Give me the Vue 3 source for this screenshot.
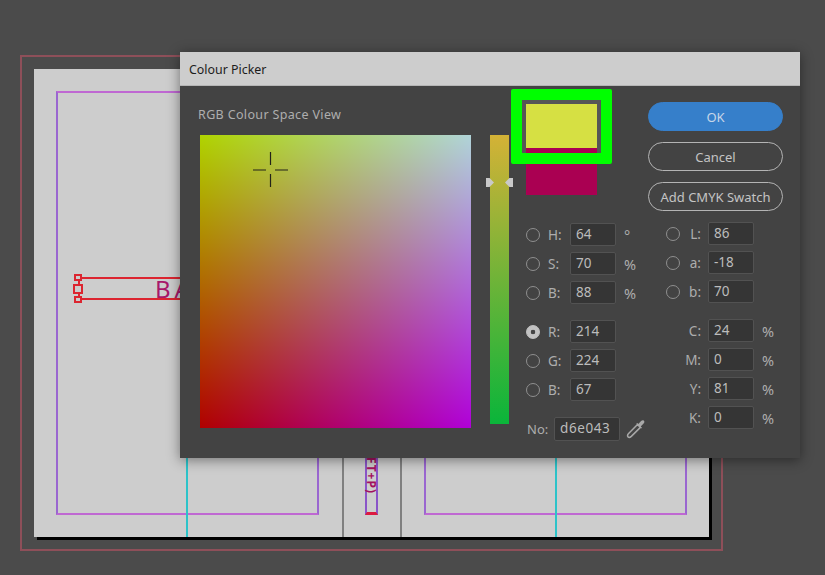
<script setup>
const hsbRows = [
  { label: 'H:', value: '64', unit: '°' },
  { label: 'S:', value: '70', unit: '%' },
  { label: 'B:', value: '88', unit: '%' }
]
const rgbRows = [
  { label: 'R:', value: '214', checked: true },
  { label: 'G:', value: '224' },
  { label: 'B:', value: '67' }
]
const labRows = [
  { label: 'L:', value: '86' },
  { label: 'a:', value: '-18' },
  { label: 'b:', value: '70' }
]
const cmykRows = [
  { label: 'C:', value: '24' },
  { label: 'M:', value: '0' },
  { label: 'Y:', value: '81' },
  { label: 'K:', value: '0' }
]
</script>

<template>
  <div class="desk">
    <div class="bleed"></div>
    <div class="page">
      <div class="margin margin-left"></div>
      <div class="margin margin-right"></div>
      <div class="guide guide-a"></div>
      <div class="guide guide-b"></div>
      <div class="fold fold-a"></div>
      <div class="fold fold-b"></div>
      <div class="spine-box"><span class="spine-text">(FT+P)</span></div>
      <div class="frame">
        <span class="handle handle-top"></span>
        <span class="handle handle-mid"></span>
        <span class="handle handle-bottom"></span>
        <span class="frame-text">BA</span>
      </div>
    </div>

    <section class="dialog">
      <header class="titlebar">Colour Picker</header>
      <div class="dialog-body">
        <div class="view">
          <div class="view-label">RGB Colour Space View</div>
          <div class="view-row">
            <div class="field">
              <svg class="cross" width="36" height="36" viewBox="0 0 36 36">
                <path d="M0 18H13M22 18H35M17.5 0V13M17.5 22V35" stroke="#23231a" stroke-width="1.2" fill="none" />
              </svg>
            </div>
            <div class="slider">
              <span class="thumb thumb-left"></span>
              <span class="thumb thumb-right"></span>
            </div>
          </div>
        </div>

        <div class="controls">
          <div class="top-row">
            <div class="swatch">
              <div class="swatch-new"></div>
              <div class="swatch-old"></div>
              <div class="highlight"></div>
            </div>
            <div class="buttons">
              <button class="btn btn-primary">OK</button>
              <button class="btn">Cancel</button>
              <button class="btn">Add CMYK Swatch</button>
            </div>
          </div>

          <div class="values">
            <div class="col col-left">
              <div class="group">
                <div v-for="r in hsbRows" :key="r.label" class="row">
                  <span class="radio"></span>
                  <span class="lbl">{{ r.label }}</span>
                  <span class="input">{{ r.value }}</span>
                  <span class="unit">{{ r.unit }}</span>
                </div>
              </div>
              <div class="group">
                <div v-for="r in rgbRows" :key="r.label" class="row">
                  <span class="radio" :class="{ checked: r.checked }"></span>
                  <span class="lbl">{{ r.label }}</span>
                  <span class="input">{{ r.value }}</span>
                </div>
              </div>
              <div class="hex-row">
                <span class="hex-lbl">No:</span>
                <span class="input hex-input">d6e043</span>
                <svg class="dropper" width="20" height="20" viewBox="0 0 20 20">
                  <path d="M11.5 5.5L2.6 14.6C1.6 15.7 1.3 17 2 17.9C2.9 18.7 4.2 18.4 5.3 17.4L14.4 8.4Z" fill="#454545" stroke="#a8a8a8" stroke-width="1.5" stroke-linejoin="round" />
                  <path d="M10.3 4.8L15.1 9.6L16 8.7L14.7 7.4L17.6 4.5C18.6 3.4 18.6 2.3 17.9 1.7C17.2 1 16.1 1.1 15.1 2.1L12.3 4.9L11.2 3.9Z" fill="#a8a8a8" />
                </svg>
              </div>
            </div>
            <div class="col col-right">
              <div class="group">
                <div v-for="r in labRows" :key="r.label" class="row">
                  <span class="radio"></span>
                  <span class="lbl lbl-end">{{ r.label }}</span>
                  <span class="input">{{ r.value }}</span>
                </div>
              </div>
              <div class="group">
                <div v-for="r in cmykRows" :key="r.label" class="row">
                  <span class="radio radio-hidden"></span>
                  <span class="lbl lbl-end">{{ r.label }}</span>
                  <span class="input">{{ r.value }}</span>
                  <span class="unit">%</span>
                </div>
              </div>
            </div>
          </div>
        </div>
      </div>
    </section>
  </div>
</template>

<style scoped>
.desk {
  position: relative;
  width: 825px;
  height: 575px;
  overflow: hidden;
  background: #4b4b4b;
  font-family: "Noto Sans", "Open Sans", sans-serif;
}
.bleed {
  position: absolute;
  left: 20px;
  top: 55px;
  width: 703px;
  height: 496px;
  box-sizing: border-box;
  border: 2px solid #8e4f59;
}
.page {
  position: absolute;
  left: 34px;
  top: 69px;
  width: 675px;
  height: 468px;
  background: #cdcdcd;
  box-shadow: 3px 3px 0 #000;
}
.margin {
  position: absolute;
  top: 22px;
  height: 424px;
  box-sizing: border-box;
  border: 2px solid #9a66d0;
  border-top-color: #bf68d2;
  border-bottom-color: #bf68d2;
}
.margin-left { left: 22px; width: 263px; }
.margin-right { left: 390px; width: 263px; }
.guide {
  position: absolute;
  top: 0;
  bottom: 0;
  width: 2px;
  background: #2cc3c9;
}
.guide-a { left: 152px; }
.guide-b { left: 521px; }
.fold {
  position: absolute;
  top: 0;
  bottom: 0;
  width: 2px;
  background: #808080;
}
.fold-a { left: 308px; }
.fold-b { left: 366px; }
.spine-box {
  position: absolute;
  left: 331px;
  top: 250px;
  width: 13px;
  height: 196px;
  box-sizing: border-box;
  border-left: 2px solid #8a55c8;
  border-right: 2px solid #8a55c8;
  border-bottom: 3px solid #dc1a40;
  display: flex;
  justify-content: center;
  align-items: flex-end;
}
.spine-text {
  writing-mode: vertical-rl;
  font-size: 12px;
  font-weight: 700;
  letter-spacing: 1px;
  line-height: 9px;
  color: #a3125f;
  margin-bottom: 18px;
}
.frame {
  position: absolute;
  left: 44px;
  top: 208px;
  width: 200px;
  height: 23px;
  box-sizing: border-box;
  border: 2px solid #dc2530;
  border-right: none;
  display: flex;
  align-items: center;
}
.handle {
  position: absolute;
  box-sizing: border-box;
  border: 2px solid #dc2530;
  background: #cdcdcd;
}
.handle-top { left: -6px; top: -5px; width: 8px; height: 7px; }
.handle-mid { left: -7px; top: 5px; width: 10px; height: 10px; }
.handle-bottom { left: -6px; top: 17px; width: 8px; height: 7px; }
.frame-text {
  margin-left: 75px;
  font-size: 24px;
  line-height: 21px;
  letter-spacing: 4px;
  color: #a8186a;
}

.dialog {
  position: absolute;
  left: 180px;
  top: 52px;
  width: 620px;
  height: 406px;
  background: #434343;
  box-shadow: 0 2px 12px rgba(0, 0, 0, 0.45);
  display: flex;
  flex-direction: column;
}
.titlebar {
  height: 34px;
  flex: none;
  background: #cdcdcd;
  border-bottom: 1px solid #b5b5b5;
  box-sizing: border-box;
  padding-left: 9px;
  line-height: 35px;
  font-size: 12.4px;
  color: #1c1c1c;
}
.dialog-body {
  display: flex;
  flex: 1;
}
.view {
  padding: 19px 0 0 18px;
}
.view-label {
  height: 30px;
  font-size: 12.5px;
  line-height: 20px;
  letter-spacing: 0.35px;
  color: #aeaeae;
}
.view-row {
  display: flex;
  align-items: flex-start;
  gap: 19px;
  margin-left: 2px;
}
.field {
  position: relative;
  width: 271px;
  height: 293px;
  background:
    linear-gradient(to top, #000, #00d400),
    linear-gradient(to right, #000, #0000d8),
    #b00000;
  background-blend-mode: screen;
}
.cross {
  position: absolute;
  left: 53px;
  top: 17px;
}
.slider {
  position: relative;
  width: 19px;
  height: 289px;
  background: linear-gradient(to bottom, #d4b236, #0ab53a);
}
.thumb {
  position: absolute;
  top: 43px;
  width: 8px;
  height: 9px;
  background: #c9c9c9;
}
.thumb-left {
  left: -4px;
  clip-path: polygon(0 0, 45% 0, 100% 50%, 45% 100%, 0 100%);
}
.thumb-right {
  right: -4px;
  clip-path: polygon(100% 0, 55% 0, 0 50%, 55% 100%, 100% 100%);
}
.controls {
  margin-left: 17px;
  padding-top: 16px;
  display: flex;
  flex-direction: column;
}
.top-row {
  display: flex;
  height: 120px;
}
.swatch {
  position: relative;
  width: 71px;
  height: 91px;
  margin-top: 2px;
}
.swatch-new { height: 44px; background: #d6e043; }
.swatch-old { height: 47px; background: #aa0052; }
.highlight {
  position: absolute;
  left: -15px;
  top: -15px;
  width: 101px;
  height: 75px;
  box-sizing: border-box;
  border: 11px solid #00ff00;
  border-radius: 2px;
  box-shadow: inset 0 4px 0 #565656, inset 4px 0 0 #565656, inset -4px 0 0 #565656;
}
.buttons {
  margin-left: 51px;
  display: flex;
  flex-direction: column;
  gap: 11px;
}
.btn {
  width: 135px;
  height: 29px;
  box-sizing: border-box;
  border: 1.5px solid #b4b4b4;
  border-radius: 15px;
  background: transparent;
  color: #c4c4c4;
  font-family: inherit;
  font-size: 13px;
  padding: 0;
}
.btn-primary {
  background: #367fca;
  border-color: #367fca;
  color: #c6d6e8;
}
.values {
  display: flex;
}
.col-left {
  width: 140px;
  padding-top: 1px;
}
.col-right {
  width: 117px;
}
.group {
  display: flex;
  flex-direction: column;
  gap: 6px;
  margin-bottom: 16px;
}
.row {
  display: flex;
  align-items: center;
  height: 23px;
}
.radio {
  width: 14px;
  height: 14px;
  box-sizing: border-box;
  border: 1.5px solid #8f8f8f;
  border-radius: 50%;
  flex: none;
}
.radio.checked {
  background: radial-gradient(circle, #444 0 2px, #c2c2c2 2.6px);
  border-color: #c2c2c2;
}
.radio-hidden {
  visibility: hidden;
}
.lbl {
  width: 22px;
  margin-left: 8px;
  font-size: 13.5px;
  color: #adadad;
}
.lbl-end {
  width: 20px;
  margin-left: 8px;
  padding-right: 7px;
  box-sizing: border-box;
  white-space: nowrap;
  display: flex;
  justify-content: flex-end;
}
.input {
  width: 46px;
  height: 23px;
  box-sizing: border-box;
  background: #353535;
  border: 1px solid #525252;
  border-radius: 2px;
  padding-left: 5px;
  font-size: 13.5px;
  line-height: 20px;
  color: #bcbcbc;
  flex: none;
}
.unit {
  margin-left: 8px;
  font-size: 14.5px;
  color: #adadad;
}
.hex-row {
  display: flex;
  align-items: center;
  height: 24px;
}
.hex-lbl {
  width: 28px;
  padding-left: 1px;
  box-sizing: border-box;
  font-size: 13px;
  color: #adadad;
}
.hex-input {
  width: 66px;
  height: 24px;
  line-height: 21px;
  padding-left: 5px;
  letter-spacing: 0.6px;
}
.dropper {
  margin-left: 6px;
}
</style>
